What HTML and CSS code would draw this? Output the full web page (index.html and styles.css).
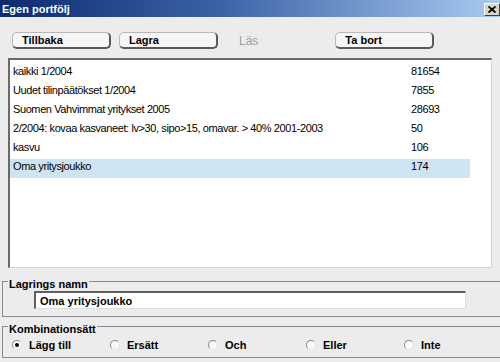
FILE: index.html
```html
<!DOCTYPE html>
<html lang="sv">
<head>
  <meta charset="UTF-8">
  <title>Egen portfölj</title>
  <link rel="stylesheet" href="styles.css">
</head>
<body>
  <div class="window">
    <div class="titlebar">
      <span>Egen portfölj</span>
      <span class="close">
        <svg width="8" height="7" viewBox="0 0 8 7"><path d="M0.5 0.5 L7.5 6.5 M7.5 0.5 L0.5 6.5" stroke="#000" stroke-width="1.8"/></svg>
      </span>
    </div>

    <div class="toolbar">
      <button class="btn">Tillbaka</button>
      <button class="btn btn-lagra">Lagra</button>
      <span class="disabled">Läs</span>
      <button class="btn btn-tabort">Ta bort</button>
    </div>

    <div class="list" id="portfolio-list"></div>

    <fieldset class="group group-name">
      <legend>Lagrings namn</legend>
      <input class="name-input" type="text" value="Oma yritysjoukko">
    </fieldset>

    <fieldset class="group group-combo">
      <legend>Kombinationsätt</legend>
      <div class="radios">
        <label class="radio"><span class="dot checked"></span>Lägg till</label>
        <label class="radio"><span class="dot"></span>Ersätt</label>
        <label class="radio"><span class="dot"></span>Och</label>
        <label class="radio"><span class="dot"></span>Eller</label>
        <label class="radio"><span class="dot"></span>Inte</label>
      </div>
    </fieldset>
  </div>

<script>
  const portfolios = [
    { name: "kaikki 1/2004", count: 81654 },
    { name: "Uudet tilinpäätökset 1/2004", count: 7855 },
    { name: "Suomen Vahvimmat yritykset 2005", count: 28693 },
    { name: "2/2004: kovaa kasvaneet: lv>30, sipo>15, omavar. > 40% 2001-2003", count: 50 },
    { name: "kasvu", count: 106 },
    { name: "Oma yritysjoukko", count: 174, selected: true }
  ];

  const list = document.getElementById("portfolio-list");
  portfolios.forEach(p => {
    const row = document.createElement("div");
    row.className = "row" + (p.selected ? " selected" : "");
    row.innerHTML = `<span class="cell-name">${p.name.replace(/</g, "&lt;").replace(/>/g, "&gt;")}</span><span class="cell-count">${p.count}</span>`;
    list.appendChild(row);
  });
</script>
</body>
</html>
```

FILE: styles.css
```css
body {
  margin: 0;
  background-color: #ececec;
  font-family: 'Liberation Sans', Arial, sans-serif;
  font-size: 11px;
  color: #000;
}

.window {
  width: 500px;
  height: 362px;
  overflow: hidden;
}

.titlebar {
  height: 17px;
  display: flex;
  align-items: center;
  justify-content: space-between;
  padding-left: 2px;
  background: linear-gradient(to right, #0c2a70, #3d64a8 45%, #a8cbf0);
  color: white;
  font-weight: bold;
}

.close {
  width: 14px;
  height: 11px;
  margin-top: 2px;
  display: flex;
  align-items: center;
  justify-content: center;
  background-color: #d8d4cc;
  border: 1px solid;
  border-color: #fff #404040 #404040 #fff;
}

.toolbar {
  display: flex;
  align-items: center;
  margin: 15px 0 0 12px;
  height: 17px;
}

.btn {
  width: 99px;
  height: 17px;
  box-sizing: border-box;
  padding: 0 0 0 9px;
  text-align: left;
  font-family: inherit;
  font-size: 11px;
  font-weight: bold;
  background-color: #f6f6f6;
  border: 1px solid #b8b8b8;
  border-right: 2px solid #5a5a5a;
  border-bottom: 2px solid #5a5a5a;
  border-radius: 5px;
  line-height: 13px;
}

.btn-lagra {
  margin-left: 8px;
}

.disabled {
  margin-left: 21px;
  color: #9c9c9c;
  font-size: 12px;
}

.btn-tabort {
  margin-left: 77px;
}

.list {
  margin: 9px 8px 0;
  height: 210px;
  box-sizing: border-box;
  background-color: #fff;
  border-top: 2px solid #6a6a6a;
  border-left: 2px solid #6a6a6a;
  border-right: 1px solid #d4d4d4;
  border-bottom: 1px solid #d4d4d4;
  padding-top: 4px;
}

.row {
  display: grid;
  grid-template-columns: 398px 59px;
  width: 457px;
  height: 19px;
  padding-left: 3px;
  line-height: 14px;
  letter-spacing: -0.4px;
}

.row.selected {
  background-color: #cfe4f2;
}

.cell-name {
  white-space: nowrap;
  overflow: hidden;
}

.group {
  margin: 5px -20px 0 2px;
  padding: 0;
  border: 1px solid #8a8a8a;
  border-right: none;
  min-width: 0;
}

.group legend {
  margin-left: 5px;
  padding: 6px 1px 0;
  font-weight: bold;
  line-height: 11px;
}

.group-name {
  padding-bottom: 7px;
}

.name-input {
  display: block;
  margin: 1px 0 0 31px;
  width: 432px;
  height: 18px;
  box-sizing: border-box;
  padding: 0 4px;
  font-family: inherit;
  font-size: 11px;
  font-weight: bold;
  border: 1px solid;
  border-top: 2px solid #606060;
  border-left: 2px solid #606060;
  border-color: #606060 #dcdcdc #dcdcdc #606060;
  background: #fff;
  outline: none;
}

.group-combo {
  margin-top: 1px;
  padding-bottom: 5px;
}

.radios {
  display: flex;
  margin: 3px 0 0 9px;
}

.radio {
  width: 98px;
  display: flex;
  align-items: center;
  gap: 7px;
  font-weight: bold;
  line-height: 14px;
}

.dot {
  width: 10px;
  height: 10px;
  box-sizing: border-box;
  border-radius: 50%;
  border: 1px solid;
  border-color: #8a8a8a #e0e0e0 #e0e0e0 #8a8a8a;
  background-color: #fafafa;
  display: flex;
  align-items: center;
  justify-content: center;
}

.dot.checked::after {
  content: "";
  width: 4px;
  height: 4px;
  border-radius: 50%;
  background-color: #000;
}
```
